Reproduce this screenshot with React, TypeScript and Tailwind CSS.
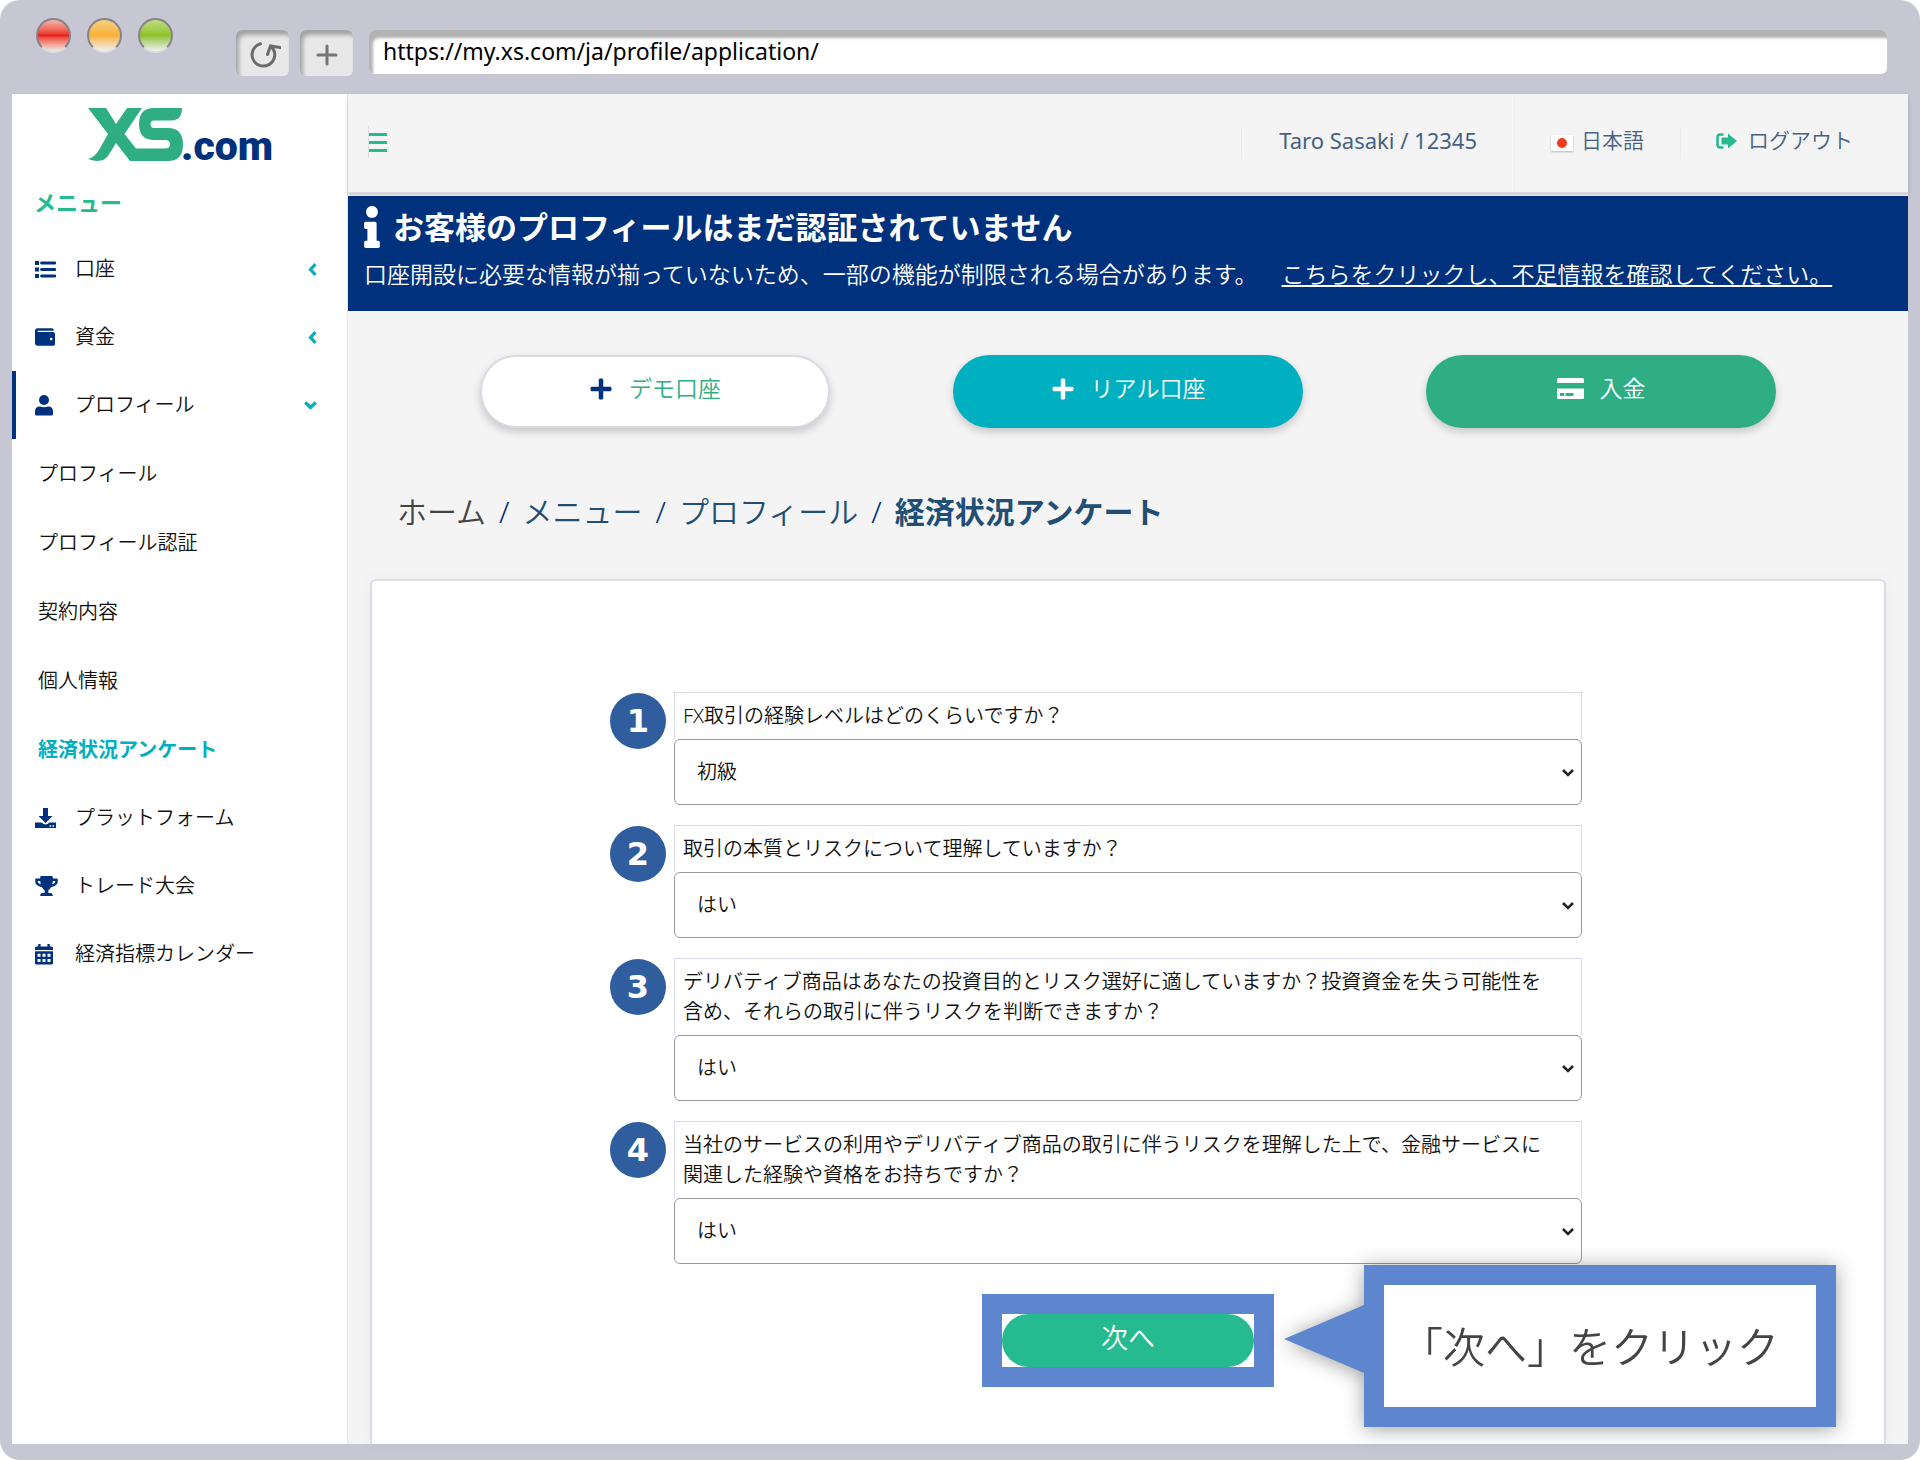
import React from "react";
import { FaWallet, FaTrophy, FaPlus, FaInfo } from "react-icons/fa";

const font = "font-['Noto_Sans','Noto_Sans_CJK_JP',sans-serif]";

type IconProps = { className?: string };

function ListIcon({ className }: IconProps) {
  return (
    <svg viewBox="0 0 21 17" className={className} fill="currentColor" aria-hidden="true">
      <path d="M0 0h4v4H0ZM0 6.500h4v4H0ZM0 13h4v4H0Z" />
      <path d="M6.500 2H20M6.500 8.500H20M6.500 15H20" stroke="currentColor" strokeWidth="2.800" strokeLinecap="round" />
    </svg>
  );
}

function UserIcon({ className }: IconProps) {
  return (
    <svg viewBox="0 0 18 21" className={className} fill="currentColor" aria-hidden="true">
      <circle cx="9" cy="5" r="5" />
      <path d="M0 19V16.500Q0 11.500 5 11.500Q9 13 13 11.500Q18 11.500 18 16.500V19Q18 20.500 16.500 20.500H1.500Q0 20.500 0 19Z" />
    </svg>
  );
}

function DownloadIcon({ className }: IconProps) {
  return (
    <svg viewBox="0 0 21 20" className={className} fill="currentColor" aria-hidden="true">
      <path d="M8 0h5v8h4.500L10.500 15 3.500 8H8Z" />
      <path fillRule="evenodd" d="M0 14.500h6.500q4 4 8 0H21V20H0ZM14.500 17.200v1.600h1.600v-1.600ZM17.500 17.200v1.600h1.600v-1.600Z" />
    </svg>
  );
}

function CalendarIcon({ className }: IconProps) {
  return (
    <svg viewBox="0 0 18 21" className={className} fill="currentColor" aria-hidden="true">
      <path d="M3.200 0h2.400v3H3.200ZM12.400 0h2.400v3h-2.400ZM1.500 2.500h15Q18 2.500 18 4V6H0V4Q0 2.500 1.500 2.500Z" />
      <path
        fillRule="evenodd"
        d="M0 7.200h18V19Q18 20.500 16.500 20.500H1.500Q0 20.500 0 19ZM2.500 9.700v3h3v-3ZM7.500 9.700v3h3v-3ZM12.500 9.700v3h3v-3ZM2.500 15v3h3v-3ZM7.500 15v3h3v-3ZM12.500 15v3h3v-3Z"
      />
    </svg>
  );
}

function CardIcon({ className }: IconProps) {
  return (
    <svg viewBox="0 0 27 21" className={className} fill="currentColor" aria-hidden="true">
      <path d="M1.500 0h24Q27 0 27 1.500V5H0V1.500Q0 0 1.500 0Z" />
      <path
        fillRule="evenodd"
        d="M0 10.500h27V19.500Q27 21 25.500 21H1.500Q0 21 0 19.500ZM3 15v3h4.200V15ZM8.500 15v3H16.500V15Z"
      />
    </svg>
  );
}

function LogoutIcon({ className }: IconProps) {
  return (
    <svg viewBox="0 0 21 16" className={className} aria-hidden="true">
      <path d="M7.500 1.500H4.500Q1.500 1.500 1.500 4.500V11.500Q1.500 14.500 4.500 14.500H7.500" fill="none" stroke="currentColor" strokeWidth="2.600" />
      <path d="M5.500 5.500Q5.500 4.500 6.500 4.500H12V0.500L21 8l-9 7.500V11.500H6.500Q5.500 11.500 5.500 10.500Z" fill="currentColor" />
    </svg>
  );
}

function ArrowLeft({ className }: IconProps) {
  return (
    <svg viewBox="0 0 9 13" className={className} fill="none" stroke="currentColor" strokeWidth="3.200" aria-hidden="true">
      <path d="M7.500 1.200L2.500 6.500L7.500 11.800" />
    </svg>
  );
}

function ArrowDown({ className }: IconProps) {
  return (
    <svg viewBox="0 0 13 9" className={className} fill="none" stroke="currentColor" strokeWidth="3.200" aria-hidden="true">
      <path d="M1.200 1.500L6.500 6.500L11.800 1.500" />
    </svg>
  );
}

function Logo() {
  return (
    <svg viewBox="0 0 200 60" className="h-[60px] w-[200px] overflow-visible" role="img" aria-label="XS.com">
      <path
        fill="#2fae84"
        d="M0 0H18L28 16L39 0H54L36.500 26L48 40.500H77Q82 40.500 82 36Q82 32 77 32H66Q51 32 51 16Q51 0 66 0H94Q94 12.500 83 12.500H66Q62.500 12.500 62.500 16Q62.500 20 66 20H80Q95 20 95 36.500Q95 53 80 53H42L28 35L20 48Q14 56 0 51Q7 49 11 42L20 26Z"
      />
      <text x="93" y="52" fill="#00317c" fontSize="41" fontWeight="900" fontFamily="Roboto, sans-serif">
        .com
      </text>
    </svg>
  );
}

type Item = {
  label: string;
  icon: React.ReactNode;
  arrow?: "left" | "down";
  active?: boolean;
};

const mainItems: Item[] = [
  { label: "口座", icon: <ListIcon className="h-[17px] w-[21px]" />, arrow: "left" },
  { label: "資金", icon: <FaWallet className="size-[20px]" />, arrow: "left" },
  { label: "プロフィール", icon: <UserIcon className="h-[21px] w-[18px]" />, arrow: "down", active: true },
];

const subItems = ["プロフィール", "プロフィール認証", "契約内容", "個人情報", "経済状況アンケート"];

const lowerItems: Item[] = [
  { label: "プラットフォーム", icon: <DownloadIcon className="h-[20px] w-[21px]" /> },
  { label: "トレード大会", icon: <FaTrophy className="h-[20px] w-[23px]" /> },
  { label: "経済指標カレンダー", icon: <CalendarIcon className="h-[21px] w-[18px]" /> },
];

function NavItem({ item }: { item: Item }) {
  return (
    <a
      href="#"
      className={
        item.active
          ? "flex h-[68px] items-center border-l-4 border-[#00317c] pr-[30px] pl-[19px]"
          : "flex h-[68px] items-center border-l-4 border-transparent pr-[30px] pl-[19px]"
      }
    >
      <span className="w-[40px] text-[#00317c]">{item.icon}</span>
      <span className="flex-1">{item.label}</span>
      {item.arrow === "left" && <ArrowLeft className="h-[13px] w-[9px] text-[#00afc0]" />}
      {item.arrow === "down" && <ArrowDown className="h-[9px] w-[13px] text-[#00afc0]" />}
    </a>
  );
}

function Sidebar() {
  return (
    <nav className="w-[335px] shrink-0 bg-white text-[20px] text-[#111]">
      <div className="flex h-[80px] items-start pt-[14px] pl-[76px]">
        <Logo />
      </div>
      <h2 className="flex h-[61px] items-center pb-1 pl-[22px] text-[22px] font-bold text-[#26ba91]">メニュー</h2>
      {mainItems.map((i) => (
        <NavItem key={i.label} item={i} />
      ))}
      {subItems.map((s, n) => (
        <a
          key={s}
          href="#"
          className={
            n === 4
              ? "flex h-[69px] items-center pl-[26px] font-bold text-[#00afc0]"
              : "flex h-[69px] items-center pl-[26px]"
          }
        >
          {s}
        </a>
      ))}
      {lowerItems.map((i) => (
        <NavItem key={i.label} item={i} />
      ))}
    </nav>
  );
}

function Chrome() {
  const lights = [
    "bg-linear-to-b from-[#f2b5a8] via-[#e81c1f] to-[#e8e8e8]",
    "bg-linear-to-b from-[#f6cf80] via-[#f8b133] to-[#f0f0f0]",
    "bg-linear-to-b from-[#c0dc80] via-[#8fc31f] to-[#f0f0f0]",
  ];
  return (
    <div className="flex h-[94px] items-start pr-[33px] pl-[36px]">
      <div className="flex gap-4 pt-[18px]">
        {lights.map((c) => (
          <span key={c} className={`size-[35px] rounded-full border-2 border-[#85838a] border-b-[#dedee2] ${c}`} />
        ))}
      </div>
      <div className="ml-[63px] flex gap-[11px] pt-[30px]">
        <button
          aria-label="再読み込み"
          className="flex h-[46px] w-[53px] items-center justify-center rounded-md bg-[#e8e8e8] shadow-[inset_3px_5px_4px_#a3a3a6]"
        >
          <svg
            viewBox="-5 0 36 26"
            className="mt-1 h-[26px] w-[36px]"
            fill="none"
            stroke="#6b6b6b"
            strokeWidth="3"
            strokeLinecap="round"
          >
            <path d="M10.500 1.800A11.300 11.300 0 1 0 22.500 6M17.500 12.500L20.500 4L30 5.500" />
          </svg>
        </button>
        <button
          aria-label="新しいタブ"
          className="flex h-[46px] w-[53px] items-center justify-center rounded-md bg-[#e8e8e8] shadow-[inset_3px_5px_4px_#a3a3a6]"
        >
          <svg viewBox="0 0 22 22" className="mt-1 size-[22px]" stroke="#757575" strokeWidth="3" strokeLinecap="round">
            <path d="M11 2V20M2 11H20" />
          </svg>
        </button>
      </div>
      <div className="flex-1 pt-[30px] pl-4">
        <input
          aria-label="アドレス"
          defaultValue="https://my.xs.com/ja/profile/application/"
          className="h-[44px] w-full rounded-md bg-white pb-0.5 pl-[14px] text-[23px] font-normal text-black shadow-[inset_4px_8px_3px_#b3b3b3]"
        />
      </div>
    </div>
  );
}

function Header() {
  return (
    <header className="relative z-10 flex h-[99px] items-center border-b border-[#ddd] bg-[#f4f4f4] text-[21px] text-[#466183] shadow-[0_2px_4px_#00000030]">
      <button aria-label="メニュー切替" className="mb-[2px] ml-5 flex h-8 flex-1 flex-col justify-center gap-[5px] border-l border-[#ddd]">
        <span className="h-[3px] w-[18px] bg-[#26ba91]" />
        <span className="h-[3px] w-[18px] bg-[#26ba91]" />
        <span className="h-[3px] w-[18px] bg-[#26ba91]" />
      </button>
      <div className="flex h-8 items-center border-l border-[#eaeaea] px-[37px] pb-1.5 text-[22px] font-normal">
        Taro Sasaki / 12345
      </div>
      <div className="flex h-full items-center gap-2 border-l border-[#ebebeb] px-[36px] pb-1">
        <span className="mt-1 flex h-[16px] w-[22px] items-center justify-center bg-white shadow-[0_1px_2px_#00000040]">
          <span className="size-[10px] rounded-full bg-[#f03b20]" />
        </span>
        日本語
      </div>
      <a href="#" className="flex h-8 items-center gap-[11px] border-l border-[#eaeaea] pr-[55px] pb-1 pl-[35px]">
        <LogoutIcon className="h-[16px] w-[21px] text-[#26ba91]" />
        ログアウト
      </a>
    </header>
  );
}

function Notice() {
  return (
    <section className="h-[115px] bg-[#00317c] px-4 pt-[9px] text-white">
      <h1 className="flex h-[44px] items-center gap-[13px] text-[31px] font-bold">
        <FaInfo className="h-[42px] w-[16px]" />
        お客様のプロフィールはまだ認証されていません
      </h1>
      <p className="flex h-[50px] items-center gap-6 text-[23px] whitespace-nowrap">
        口座開設に必要な情報が揃っていないため、一部の機能が制限される場合があります。
        <a href="#" className="underline">
          こちらをクリックし、不足情報を確認してください。
        </a>
      </p>
    </section>
  );
}

const questions = [
  { q: "FX取引の経験レベルはどのくらいですか？", a: "初級" },
  { q: "取引の本質とリスクについて理解していますか？", a: "はい" },
  {
    q: "デリバティブ商品はあなたの投資目的とリスク選好に適していますか？投資資金を失う可能性を含め、それらの取引に伴うリスクを判断できますか？",
    a: "はい",
  },
  {
    q: "当社のサービスの利用やデリバティブ商品の取引に伴うリスクを理解した上で、金融サービスに関連した経験や資格をお持ちですか？",
    a: "はい",
  },
];

function Question({ n, q, a }: { n: number; q: string; a: string }) {
  return (
    <div className="flex items-start gap-2">
      <span className="mt-px flex size-14 shrink-0 items-center justify-center rounded-full bg-[#2f5d9e] font-['DejaVu_Sans',sans-serif] text-[32px] font-bold text-white">
        {n}
      </span>
      <div className="min-w-0 flex-1">
        <label
          htmlFor={`q${n}`}
          className="block border border-b-0 border-[#d8dbe5] py-2 pr-6 pl-2 text-[20px] leading-[30px] text-[#111]"
        >
          {q}
        </label>
        <div className="relative">
          <select
            id={`q${n}`}
            className="block h-[66px] w-full appearance-none rounded-md border border-[#999] bg-white px-[22px] text-[20px] text-[#111]"
          >
            <option>{a}</option>
          </select>
          <svg
            viewBox="0 0 12 8"
            className="pointer-events-none absolute top-[30px] right-2 h-[8px] w-[12px]"
            fill="none"
            stroke="#222"
            strokeWidth="2.500"
            aria-hidden="true"
          >
            <path d="M1 1L6 6L11 1" />
          </svg>
        </div>
      </div>
    </div>
  );
}

function Callout() {
  return (
    <div className="absolute right-[72px] bottom-[17px] filter-[drop-shadow(0_2px_10px_#00000060)]">
      <svg viewBox="0 0 80 68" className="absolute top-[40px] right-full h-[68px] w-[80px]" fill="#5d86cf" aria-hidden="true">
        <path d="M0 34L80 0V68Z" />
      </svg>
      <div className="flex h-[162px] w-[472px] items-center justify-center border-[20px] border-[#5d86cf] bg-white pr-5 text-[42px] whitespace-nowrap text-[#444]">
        「次へ」をクリック
      </div>
    </div>
  );
}

export default function App() {
  return (
    <div className="bg-white">
      <div className={`overflow-hidden rounded-[20px] bg-[#c7c6d3] pb-4 font-[350] ${font}`}>
        <Chrome />
        <div className="mx-3 flex bg-[#f4f4f4]">
          <Sidebar />
          <div className="relative min-w-0 flex-1 border-l border-[#e8e8e8]">
            <Header />
            <div className="h-[3px]" />
            <Notice />
            <div className="mt-[44px] flex justify-between px-[132px] text-[23px]">
              <button className="flex h-[73px] w-[350px] items-center justify-center gap-4 rounded-full border-2 border-[#d9dbe4] bg-white pb-1.5 text-[#2fae84] shadow-[0_4px_8px_#00000030]">
                <FaPlus className="size-[24px] text-[#00317c]" />
                デモ口座
              </button>
              <button className="flex h-[73px] w-[350px] items-center justify-center gap-4 rounded-full bg-[#00afc0] pb-1.5 text-white shadow-[0_4px_8px_#00000030]">
                <FaPlus className="size-[24px]" />
                リアル口座
              </button>
              <button className="flex h-[73px] w-[350px] items-center justify-center gap-4 rounded-full bg-[#2fae84] pb-1.5 text-white shadow-[0_4px_8px_#00000030]">
                <CardIcon className="h-[21px] w-[27px]" />
                入金
              </button>
            </div>
            <nav className="mt-[61px] flex h-[44px] items-center gap-[13px] pl-[49px] text-[30px] text-[#214e75]">
              <a href="#" className="text-[#444]">ホーム</a>
              <span className="text-[#00317c]">/</span>
              <a href="#">メニュー</a>
              <span className="text-[#00317c]">/</span>
              <a href="#">プロフィール</a>
              <span className="text-[#00317c]">/</span>
              <strong className="font-bold">経済状況アンケート</strong>
            </nav>
            <main className="mx-[22px] mt-[46px] rounded-t-md border-2 border-b-0 border-[#dcdce4] bg-white pt-[111px] shadow-[0_0_16px_#0000000a]">
              <form className="mx-auto w-[908px]" onSubmit={(e) => e.preventDefault()}>
                <div className="-ml-16 flex flex-col gap-5">
                  {questions.map((x, i) => (
                    <Question key={x.q} n={i + 1} q={x.q} a={x.a} />
                  ))}
                </div>
                <div className="mt-[30px] flex justify-center pb-[57px]">
                  <div className="border-[20px] border-[#5d86cf] bg-white">
                    <button className="flex h-[53px] w-[252px] items-center justify-center rounded-full bg-[#26ba91] pb-1 text-[27px] text-white">
                      次へ
                    </button>
                  </div>
                </div>
              </form>
            </main>
            <Callout />
          </div>
        </div>
      </div>
    </div>
  );
}
